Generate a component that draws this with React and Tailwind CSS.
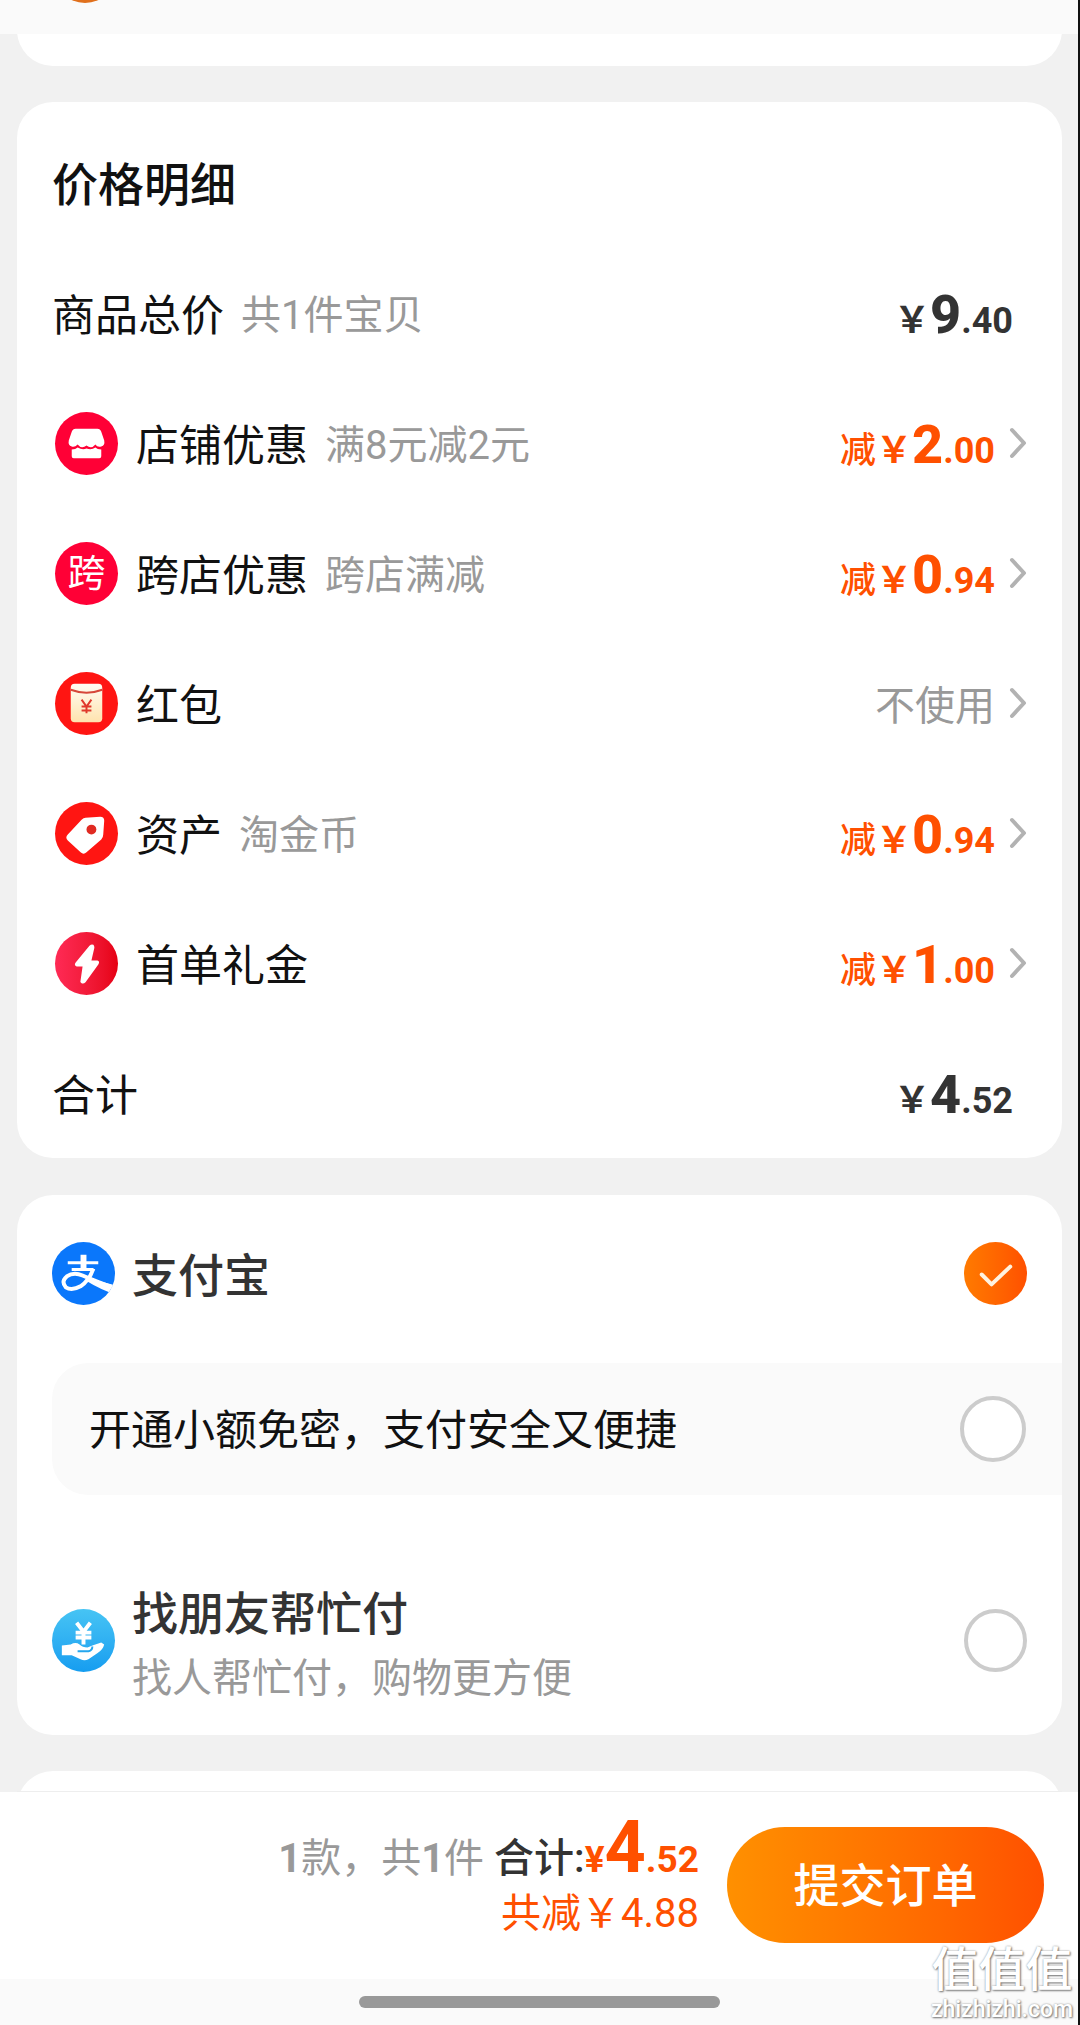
import React, { useState } from 'react'

function RoundIcon({ children, className = '' }) {
  return (
    <span className={`flex size-[63px] shrink-0 items-center justify-center overflow-hidden rounded-full text-white ${className}`}>
      {children}
    </span>
  )
}

function ShopIcon() {
  return (
    <RoundIcon className="bg-[#ff0036]">
      <svg viewBox="0 0 64 64" className="size-full" fill="currentColor" aria-hidden="true">
        <path d="M21 17h22q3 0 4 3l3 9q1 5-3 6-4 1-6-2-4 5-9 1-5 4-9-1-3 3-6 2-4-1-3-6l3-9q1-3 4-3z" />
        <path d="M17 38q4 0 6-2 5 3 9 1 5 2 9-1 2 2 6 2v7q0 2-2 2H19q-2 0-2-2z" />
      </svg>
    </RoundIcon>
  )
}

function CrossIcon() {
  return <RoundIcon className="bg-[#ff0036] text-[38px]">跨</RoundIcon>
}

function RedPacketIcon() {
  return (
    <RoundIcon className="bg-[#ff1512]">
      <svg viewBox="0 0 64 64" className="size-full" aria-hidden="true">
        <defs>
          <linearGradient id="packet" x1="0" y1="0" x2="0" y2="1">
            <stop offset="0" stopColor="#fffdf4" />
            <stop offset="1" stopColor="#ffe3ae" />
          </linearGradient>
        </defs>
        <rect x="16" y="12" width="32" height="39" rx="4" fill="url(#packet)" />
        <path d="M16 18q16 6 32 0" fill="none" stroke="#d6483a" strokeWidth="2" />
        <path d="M27 28l5 7 5-7M32 35v7M27 35h10M27 39h10" fill="none" stroke="#e0392b" strokeWidth="2" />
      </svg>
    </RoundIcon>
  )
}

function TagIcon() {
  return (
    <RoundIcon className="bg-[#ff1512]">
      <svg viewBox="0 0 64 64" className="size-full" aria-hidden="true">
        <path d="M31 16l15-1q4 0 4 4l-1 14q0 3-2 5L32 51q-3 3-6 0L13 39q-3-3 0-6l14-15q2-2 4-2z" fill="#fff" />
        <circle cx="37" cy="28" r="5" fill="#e02a22" />
      </svg>
    </RoundIcon>
  )
}

function BoltIcon() {
  return (
    <RoundIcon className="bg-linear-to-r from-[#ff2a55] to-[#e60012]">
      <svg viewBox="0 0 64 64" className="size-full" aria-hidden="true">
        <path d="M35 14q2-2 4-1 1 1 1 3l-3 13h6q3 1 1 4L31 51q-2 2-4 1-2-1-1-3l2-14h-6q-3-1-1-4z" fill="#fff" />
      </svg>
    </RoundIcon>
  )
}

function AlipayIcon() {
  return (
    <RoundIcon className="bg-[#0a77fb]">
      <svg viewBox="0 0 64 64" className="size-full" fill="none" stroke="#fff" aria-hidden="true">
        <path d="M32 13v14" strokeWidth="6" />
        <path d="M16 21h31M20 28h22" strokeWidth="3" />
        <path d="M42 27q-4 12-13 18-9 5-15 1-5-6 1-11 7-5 16-1 14 6 33 13" strokeWidth="4" />
        <path d="M38 37l26 7v9q-15-5-28-13z" fill="#fff" stroke="none" />
      </svg>
    </RoundIcon>
  )
}

function FriendPayIcon() {
  return (
    <RoundIcon className="bg-linear-to-b from-[#46c4f4] to-[#159df0]">
      <svg viewBox="0 0 64 64" className="size-full" aria-hidden="true">
        <path d="M25 14l7 9 7-9M32 23v13M24 24h16M24 29h16" fill="none" stroke="#fff" strokeWidth="4" />
        <path d="M10 37l9-1q5-3 9 0 3 3 8 3l5-2 6-2 3-1 3 2q-1 5-7 9l-9 6q-4 2-8 0l-9-4H10z" fill="#fff" />
        <path d="M26 43h11q4-1 4-5" fill="none" stroke="#25a7ee" strokeWidth="2" />
      </svg>
    </RoundIcon>
  )
}

function Chevron() {
  return (
    <svg viewBox="0 0 18 32" className="ml-[14px] h-8 w-[18px] shrink-0" fill="none" aria-hidden="true">
      <path d="M3 3l12 13L3 29" stroke="#b2b2b2" strokeWidth="4" strokeLinecap="round" strokeLinejoin="round" />
    </svg>
  )
}

function Price({ value }) {
  const [whole, cents] = value.split('.')
  return (
    <span className="font-bold">
      <span className="text-[36px]">￥</span>
      <span className="text-[54px] font-extrabold">{whole}</span>
      <span className="text-[36px]">.{cents}</span>
    </span>
  )
}

function Row({ icon, label, note, onClick, children }) {
  const content = (
    <>
      {icon && <span className="mr-[18px] ml-[3px]">{icon}</span>}
      <span className="pt-1.5 text-[43px] text-[#111]">{label}</span>
      {note && <span className="ml-[17px] pt-1.5 text-[40px] text-[#999]">{note}</span>}
      <span className="ml-auto pt-[3px]">{children}</span>
    </>
  )
  if (!onClick) return <div className="flex h-[130px] items-center pr-[14px] pb-1">{content}</div>
  return (
    <button type="button" onClick={onClick} className="flex h-[130px] w-full items-center pb-1 text-left">
      {content}
      <Chevron />
    </button>
  )
}

const discounts = [
  { id: 'shop', icon: <ShopIcon />, label: '店铺优惠', note: '满8元减2元', off: '2.00' },
  { id: 'cross', icon: <CrossIcon />, label: '跨店优惠', note: '跨店满减', off: '0.94' },
  { id: 'packet', icon: <RedPacketIcon />, label: '红包' },
  { id: 'asset', icon: <TagIcon />, label: '资产', note: '淘金币', off: '0.94' },
  { id: 'first', icon: <BoltIcon />, label: '首单礼金', off: '1.00' },
]

function PriceCard() {
  const [, setOpened] = useState(null)
  return (
    <section className="flow-root rounded-[36px] bg-white px-[35px]">
      <h2 className="pt-[51px] text-[46px] leading-[64px] font-medium text-[#111]">价格明细</h2>
      <div className="-mb-0.5 pt-[33px]">
        <Row label="商品总价" note="共1件宝贝">
          <span className="text-[#333]"><Price value="9.40" /></span>
        </Row>
        {discounts.map((d) => (
          <Row key={d.id} icon={d.icon} label={d.label} note={d.note} onClick={() => setOpened(d.id)}>
            {d.off ? (
              <span className="text-[#ff5000]">
                <span className="text-[36px] font-medium">减</span>
                <Price value={d.off} />
              </span>
            ) : (
              <span className="block pt-1 text-[40px] text-[#999]">不使用</span>
            )}
          </Row>
        ))}
        <Row label="合计">
          <span className="text-[#333]"><Price value="4.52" /></span>
        </Row>
      </div>
    </section>
  )
}

function PayRadio({ id, checked, onChange }) {
  return (
    <span className="relative flex size-[63px] shrink-0">
      <input
        id={id}
        type="radio"
        name="pay"
        checked={checked}
        onChange={onChange}
        className="size-full appearance-none rounded-full border-4 border-[#ccc] bg-white checked:border-0 checked:bg-linear-to-r checked:from-[#ff7a00] checked:to-[#ff5000]"
      />
      {checked && (
        <svg viewBox="0 0 64 64" className="pointer-events-none absolute inset-0 size-full" fill="none" aria-hidden="true">
          <path d="M18 33l10 10 19-18" stroke="#fff3e0" strokeWidth="4" strokeLinecap="round" strokeLinejoin="round" />
        </svg>
      )}
    </span>
  )
}

function PayCard() {
  const [method, setMethod] = useState('alipay')
  const [quick, setQuick] = useState(false)
  return (
    <section className="rounded-[36px] bg-white pt-[46px] pb-6 pl-[35px]">
      <label htmlFor="alipay" className="flex h-16 items-center pr-[35px]">
        <AlipayIcon />
        <span className="mr-auto ml-[17px] pt-1.5 text-[46px] font-medium text-[#333]">支付宝</span>
        <PayRadio id="alipay" checked={method === 'alipay'} onChange={() => setMethod('alipay')} />
      </label>

      <label htmlFor="quick" className="mt-[58px] flex h-[132px] items-center rounded-l-[36px] bg-[#fafafa] pr-9 pl-[37px]">
        <span className="pt-0.5 text-[42px] text-[#111]">开通小额免密，支付安全又便捷</span>
        <input
          id="quick"
          type="checkbox"
          checked={quick}
          onChange={(e) => setQuick(e.target.checked)}
          className="ml-auto size-[66px] appearance-none rounded-full border-4 border-[#ccc] bg-white checked:bg-[#ff5000]"
        />
      </label>

      <label htmlFor="friend" className="mt-[86px] flex pr-[35px]">
        <span className="pt-7"><FriendPayIcon /></span>
        <span className="mr-auto ml-[17px] flex flex-col">
          <span className="text-[46px] leading-[66px] font-medium text-[#333]">找朋友帮忙付</span>
          <span className="text-[40px] leading-[64px] text-[#999]">找人帮忙付，购物更方便</span>
        </span>
        <span className="pt-7">
          <PayRadio id="friend" checked={method === 'friend'} onChange={() => setMethod('friend')} />
        </span>
      </label>
    </section>
  )
}

function SubmitBar() {
  return (
    <footer className="relative bg-white">
      <div className="flex h-[187px] items-center justify-end pr-[34px] pb-0.5">
        <div className="flex flex-col items-end pb-[13px]">
          <div className="text-[40px] leading-[60px] whitespace-nowrap text-[#333]">
            <span className="mr-[10px] text-[#999]"><b>1</b>款，共<b>1</b>件</span>
            <span className="font-medium">合计:</span>
            <span className="text-[37px] font-bold text-[#ff5000]">
              ¥<span className="text-[72px]">4</span>.52
            </span>
          </div>
          <div className="text-[40px] leading-[48px] text-[#ff5000]">共减￥4.88</div>
        </div>
        <button type="button" className="ml-[28px] h-[116px] w-[317px] rounded-full bg-linear-to-r from-[#ff9000] to-[#ff5000] pt-1 text-[46px] font-medium text-white">
          提交订单
        </button>
      </div>
      <div className="flex h-[47px] justify-center bg-[#fafafa] pt-[17px]">
        <div className="h-3 w-[361px] rounded-full bg-[#999]" />
      </div>
      {/* Watermark */}
      <div className="absolute right-[5px] bottom-0 flex flex-col items-center font-medium text-white [text-shadow:1px_1px_2px_#777,0_0_2px_#999]">
        <span className="text-[47px] leading-[48px]">值值值</span>
        <span className="text-[23px] leading-[32px]">zhizhizhi.com</span>
      </div>
    </footer>
  )
}

export default function App() {
  return (
    <div className="border-r-2 border-[#111] bg-[#f1f1f1] font-[Roboto,'Noto_Sans_CJK_SC',sans-serif]">
      <header className="relative h-[34px] overflow-hidden bg-[#fafafa]">
        <span className="absolute -top-[61px] left-[53px] h-16 w-16 rounded-full bg-[#e0701c]" />
      </header>
      <main className="pr-4 pl-[17px]">
        <div className="flex h-8 flex-col justify-end overflow-hidden">
          <div className="h-20 shrink-0 rounded-b-[36px] bg-white" />
        </div>
        <div className="mt-9"><PriceCard /></div>
        <div className="mt-[37px]"><PayCard /></div>
        <div className="mt-9 h-[21px] overflow-hidden border-b border-[#eee]">
          <div className="h-20 rounded-t-[36px] bg-white" />
        </div>
      </main>
      <SubmitBar />
    </div>
  )
}
